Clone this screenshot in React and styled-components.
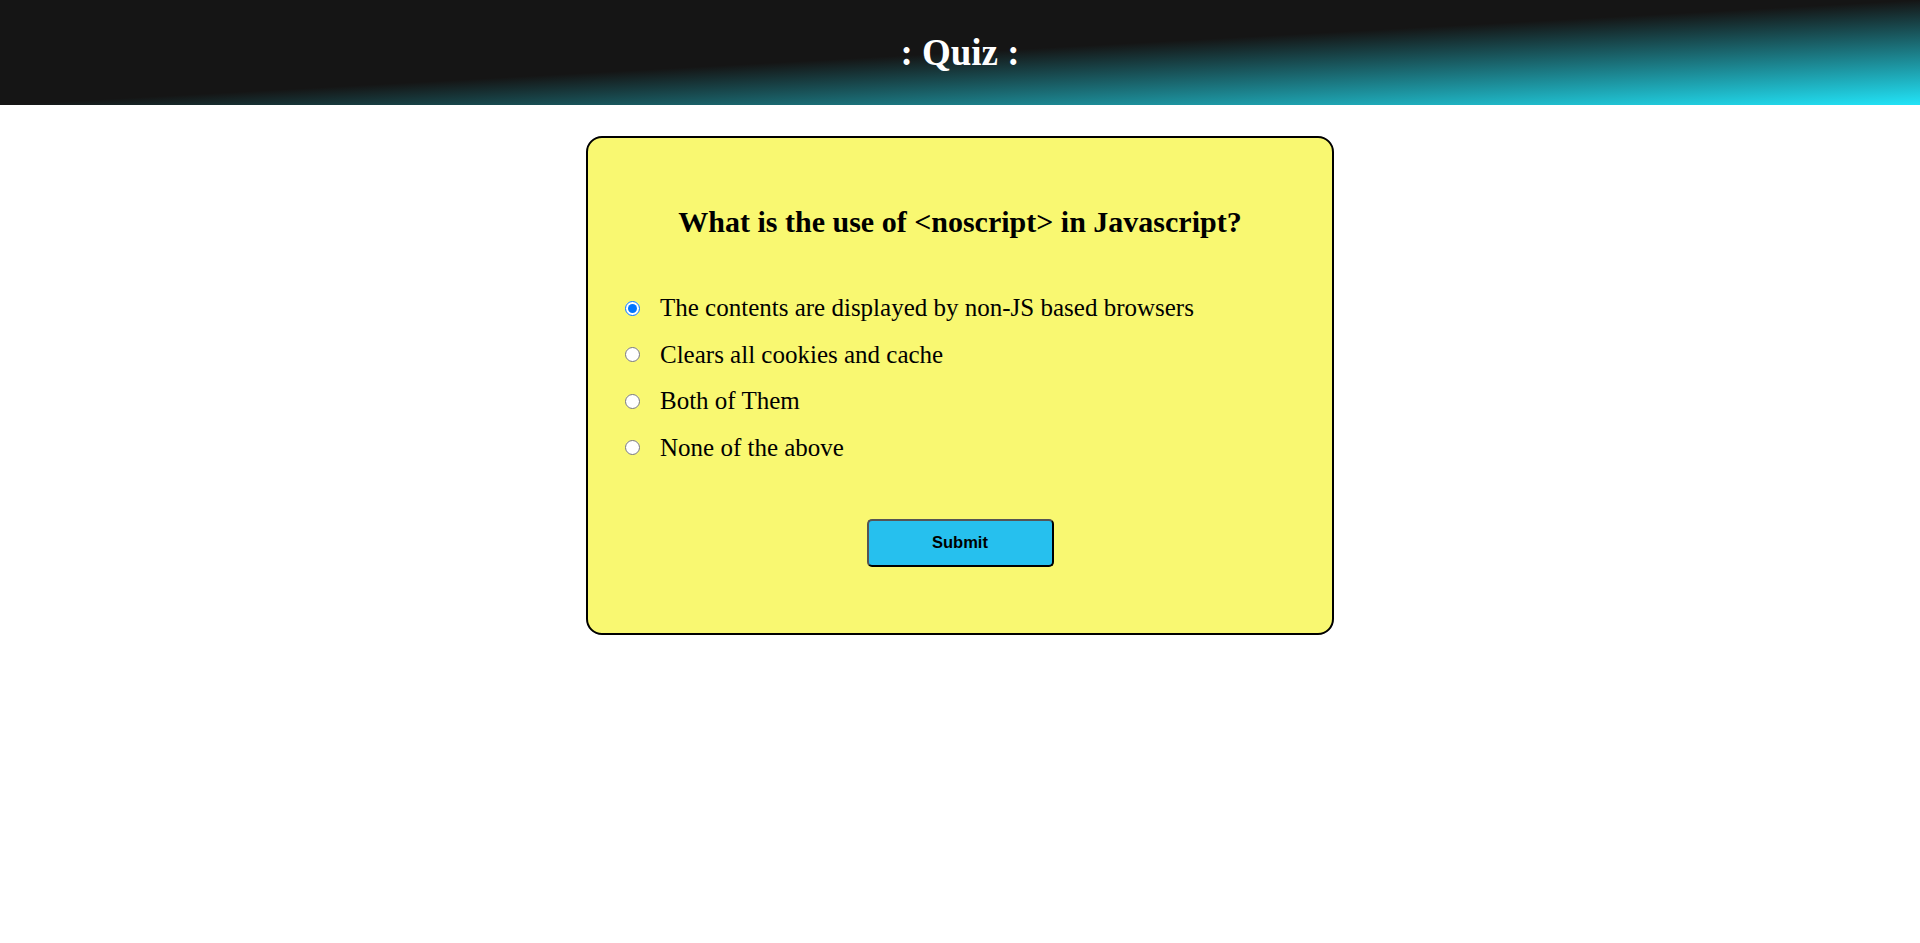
import { useState } from "react";
import styled, { createGlobalStyle } from "styled-components";

const GlobalStyle = createGlobalStyle`
  html, body {
    margin: 0;
    padding: 0;
    background: #ffffff;
    font-family: "Liberation Serif", "Times New Roman", serif;
  }
`;

const Header = styled.header`
  height: 105px;
  display: flex;
  align-items: center;
  justify-content: center;
  background: linear-gradient(to bottom right, #151515 50%, #22e4f8 100%);
`;

const Title = styled.h1`
  margin: 0;
  color: #ffffff;
  font-size: 37px;
  font-weight: bold;
  line-height: 1;
`;

const Main = styled.main`
  display: flex;
  justify-content: center;
  padding-top: 31px;
`;

const Card = styled.div`
  box-sizing: border-box;
  width: 748px;
  background-color: #f9f871;
  border: 2px solid #000;
  border-radius: 16px;
  padding: 66px 36px 66px;
  display: flex;
  flex-direction: column;
`;

const Question = styled.h2`
  margin: 0;
  text-align: center;
  font-size: 30px;
  line-height: 36px;
  font-weight: bold;
  color: #000;
`;

const Options = styled.ul`
  list-style: none;
  margin: 53px 0 0;
  padding: 0;
  display: flex;
  flex-direction: column;
  gap: 16.5px;
`;

const Option = styled.li`
  display: flex;
  align-items: center;
  height: 30px;
`;

const Radio = styled.input`
  width: 15px;
  height: 15px;
  margin: 0 20px 0 1px;
`;

const OptionLabel = styled.label`
  font-size: 25px;
  line-height: 30px;
  color: #000;
`;

const SubmitButton = styled.button`
  align-self: center;
  margin-top: 56px;
  width: 187px;
  height: 48px;
  background-color: #26c0ee;
  border: 2px solid;
  border-color: #555 #000 #000 #555;
  border-radius: 5px;
  font-family: "Liberation Sans", Arial, sans-serif;
  font-weight: bold;
  font-size: 16.5px;
  color: #000;
  cursor: pointer;
`;

const answers = [
  "The contents are displayed by non-JS based browsers",
  "Clears all cookies and cache",
  "Both of Them",
  "None of the above",
];

export default function App() {
  const [selected, setSelected] = useState(0);

  return (
    <>
      <GlobalStyle />
      <Header>
        <Title>: Quiz :</Title>
      </Header>
      <Main>
        <Card>
          <Question>What is the use of &lt;noscript&gt; in Javascript?</Question>
          <Options>
            {answers.map((text, i) => (
              <Option key={text}>
                <Radio
                  type="radio"
                  name="answer"
                  id={`answer-${i}`}
                  checked={selected === i}
                  onChange={() => setSelected(i)}
                />
                <OptionLabel htmlFor={`answer-${i}`}>{text}</OptionLabel>
              </Option>
            ))}
          </Options>
          <SubmitButton type="button">Submit</SubmitButton>
        </Card>
      </Main>
    </>
  );
}
